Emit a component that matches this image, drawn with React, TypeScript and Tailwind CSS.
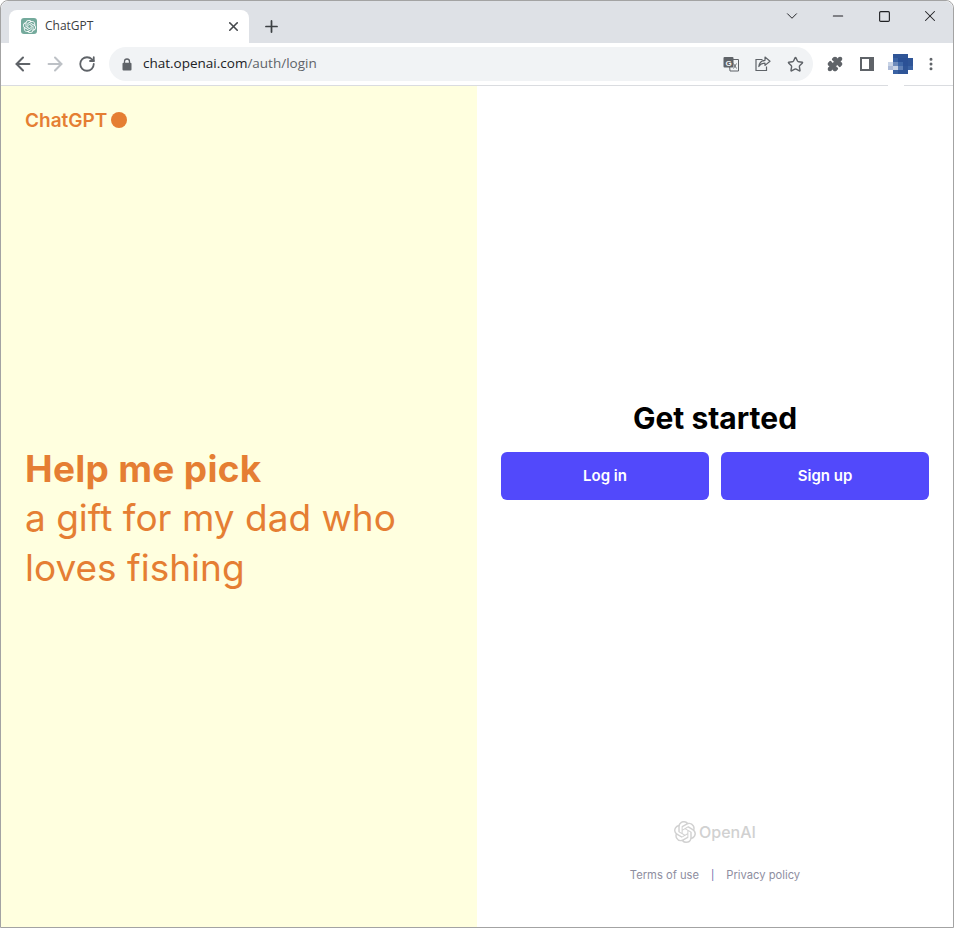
import { ArrowLeft, ArrowRight, RotateCw, X, Plus, ChevronDown, Minus, Square, Star, Puzzle, EllipsisVertical } from 'lucide-react';
import { SiOpenai } from 'react-icons/si';

const sans = 'font-["Inter","Liberation_Sans",sans-serif]';

function LockIcon() {
  return (
    <svg width="10" height="13" viewBox="0 0 10 13" className="shrink-0">
      <path d="M2.500 5V3.500a2.500 2.500 0 0 1 5 0V5" fill="none" stroke="#5f6368" strokeWidth="1.300" />
      <rect x="0.500" y="4.800" width="9" height="7.700" rx="1" fill="#5f6368" />
    </svg>
  );
}

function TranslateIcon() {
  return (
    <svg width="16" height="16" viewBox="0 0 16 16">
      <path d="M6 3.500h9.500v11.500H7z" fill="#f1f3f5" stroke="#5f6368" strokeWidth="1" />
      <rect x="0.500" y="1" width="10" height="10.500" rx="1" fill="#5f6368" />
      <text x="5.500" y="9.500" textAnchor="middle" fontSize="8" fontWeight="700" fill="#f1f3f5" fontFamily="Liberation Sans">G</text>
      <path d="M10.500 7.500l3 5M13.500 7.500l-3 5" fill="none" stroke="#5f6368" strokeWidth="0.900" />
    </svg>
  );
}

function ShareIcon() {
  return (
    <svg width="16" height="16" viewBox="0 0 16 16" fill="none" stroke="#5f6368" strokeWidth="1.200">
      <path d="M7.500 3.500H1v11h10.500V10.500" />
      <path d="M10 1l5 4.200-5 4.200V7.200C7 7.200 5 8.200 3.800 10.500c.4-3.700 2.700-5.700 6.200-6.200z" strokeLinejoin="round" />
    </svg>
  );
}

function SidePanelIcon() {
  return (
    <svg width="14" height="14" viewBox="0 0 14 14">
      <rect width="14" height="14" fill="#5f6368" />
      <rect x="2" y="2" width="7" height="10" fill="#fff" />
    </svg>
  );
}

// blurred profile picture
function Avatar() {
  const cells: [number, number, string][] = [
    [1, 0, '#2f5597'], [2, 0, '#2f5597'], [3, 0, '#2f5597'],
    [1, 1, '#3a62a3'], [2, 1, '#2b5196'], [3, 1, '#2b5196'], [4, 1, '#2f5597'],
    [0, 2, '#c9d4e6'], [1, 2, '#6f8cbc'], [2, 2, '#3f68a8'], [3, 2, '#2b5196'], [4, 2, '#2f5597'],
    [0, 3, '#aebcd8'], [1, 3, '#c9d4e6'], [2, 3, '#5f80b6'], [3, 3, '#2f5597'], [4, 3, '#3a62a3'],
    [1, 4, '#3a62a3'], [2, 4, '#2f5597'], [3, 4, '#2f5597'],
  ];
  return (
    <svg width="25" height="20" viewBox="0 0 25 20" shapeRendering="crispEdges">
      {cells.map(([x, y, c]) => (
        <rect key={`${x}-${y}`} x={x * 5} y={y * 4} width="5" height="4" fill={c} />
      ))}
    </svg>
  );
}

function BrowserChrome() {
  return (
    <div className={`shrink-0 font-["Liberation_Sans",sans-serif]`}>
      <div className="h-[42px] bg-[#dee1e6] flex items-end pl-[8px] rounded-t-[8px] relative">
        <div className="w-[240px] h-[33px] bg-white rounded-t-[8px] flex items-center pl-[12px] pr-[8px] pb-[1px]">
          <span className="w-[16px] h-[16px] rounded-[3px] bg-[#74aa9c] flex items-center justify-center shrink-0">
            <SiOpenai className="w-[13px] h-[13px] text-white" />
          </span>
          <span className="ml-[8px] text-[12px] text-[#3c4043] flex-1 font-['Open_Sans',sans-serif]">ChatGPT</span>
          <X className="w-[15px] h-[15px] text-[#45484c]" strokeWidth={2.6} />
        </div>
        <div className="w-[44px] h-[33px] flex items-center justify-center">
          <Plus className="w-[19px] h-[19px] text-[#3c4043]" strokeWidth={2.2} />
        </div>
        <div className="absolute right-0 top-0 flex items-center h-[30px]">
          <div className="w-[46px] flex justify-center"><ChevronDown className="w-[18px] h-[18px] text-[#202124]" strokeWidth={1.300} /></div>
          <div className="w-[46px] flex justify-center"><Minus className="w-[16px] h-[16px] text-[#202124]" strokeWidth={1.600} /></div>
          <div className="w-[46px] flex justify-center"><Square className="w-[13px] h-[13px] text-[#202124]" strokeWidth={2.100} /></div>
          <div className="w-[46px] flex justify-center"><X className="w-[18px] h-[18px] text-[#202124]" strokeWidth={1.400} /></div>
        </div>
      </div>
      <div className="h-[43px] bg-white border-b border-[#dadce0] flex items-center relative">
        <div className="w-[108px] flex items-center shrink-0">
          <div className="w-[32px] ml-[6px] flex justify-center"><ArrowLeft className="w-[22px] h-[22px] text-[#5f6368] shrink-0" strokeWidth={2.200} /></div>
          <div className="w-[32px] flex justify-center"><ArrowRight className="w-[22px] h-[22px] text-[#bdc1c6] shrink-0" strokeWidth={2.200} /></div>
          <div className="w-[32px] flex justify-center"><RotateCw className="w-[18px] h-[18px] text-[#5f6368]" strokeWidth={2.400} /></div>
        </div>
        <div className="w-[704px] h-[34px] rounded-full bg-[#f1f3f5] flex items-center pl-[13px] pr-[9px] shrink-0">
          <LockIcon />
          <span className="ml-[11px] pb-[2px] text-[13.5px] flex-1 font-['Open_Sans',sans-serif] text-[#5f6368]"><span className="text-[#202124]">chat.openai.com</span>/auth/login</span>
          <div className="flex items-center gap-[16px]">
            <TranslateIcon />
            <ShareIcon />
            <Star className="w-[17px] h-[17px] text-[#5f6368]" strokeWidth={2} />
          </div>
        </div>
        <div className="flex items-center flex-1 pl-[14px]">
          <Puzzle className="w-[16px] h-[16px] text-[#5f6368] fill-[#5f6368]" />
          <div className="ml-[17px]"><SidePanelIcon /></div>
          <div className="ml-[14px]"><Avatar /></div>
          <EllipsisVertical className="ml-[10px] w-[16px] h-[16px] text-[#5f6368]" strokeWidth={2.500} />
        </div>
        <div className="absolute left-[887px] -bottom-px w-[16px] h-[6px] bg-white" />
      </div>
    </div>
  );
}

export default function App() {
  return (
    <div className={`w-[954px] h-[928px] flex flex-col bg-white border border-[#a3a3a3] rounded-t-[8px] overflow-hidden ${sans}`}>
      <BrowserChrome />
      <div className="flex-1 flex min-h-0">
        <div className="w-[476px] shrink-0 bg-[#ffffdf] text-[#e57e33] pl-[24px] flex flex-col">
          <div className="mt-[23px] flex items-center h-[24px]">
            <span className="text-[19px] font-semibold">ChatGPT</span>
            <span className="ml-[4px] mb-[2px] w-[16px] h-[16px] rounded-full bg-[#e57e33]" />
          </div>
          <div className="mt-[312px] text-[37px]">
            <div className="font-bold leading-[48px] tracking-[0.3px]">Help me pick</div>
            <div className="leading-[50px]">a gift for my dad who</div>
            <div className="leading-[50px]">loves fishing</div>
          </div>
        </div>
        <div className="flex-1 flex flex-col items-center">
          <h1 className="mt-[312px] text-[30px] leading-[40px] font-bold text-black">Get started</h1>
          <div className="mt-[14px] flex gap-[12px]">
            <button className="w-[208px] h-[48px] rounded-[6px] bg-[#5249fb] text-white text-[15px] font-semibold">Log in</button>
            <button className="w-[208px] h-[48px] rounded-[6px] bg-[#5249fb] text-white text-[15px] font-semibold">Sign up</button>
          </div>
          <div className="mt-[320px] flex items-center gap-[3px] text-[#d1d1d1]">
            <SiOpenai className="w-[22px] h-[22px]" />
            <span className="text-[16px] font-medium">OpenAI</span>
          </div>
          <div className="mt-[23px] flex items-center text-[11.200px] text-[#8e8ea0]">
            <span>Terms of use</span>
            <span className="mx-[12px] text-[10px] text-[#5b62a8]">|</span>
            <span>Privacy policy</span>
          </div>
        </div>
      </div>
    </div>
  );
}
